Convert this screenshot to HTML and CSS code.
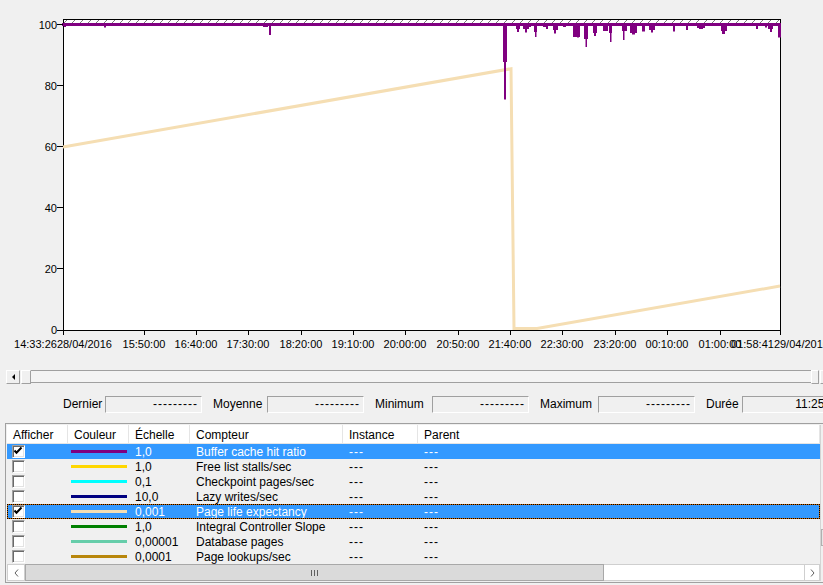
FILE: index.html
```html
<!DOCTYPE html>
<html lang="fr">
<head>
<meta charset="utf-8">
<title>Analyseur de performances</title>
<link rel="stylesheet" href="styles.css">
</head>
<body>
<svg class="chart" width="823" height="370" viewBox="0 0 823 370">
  <defs>
    <pattern id="hatch" x="0" y="20" width="8" height="3" patternUnits="userSpaceOnUse">
      <path d="M0,3 L3,0" stroke="#7a7a7a" stroke-width="1" fill="none"/>
    </pattern>
  </defs>
  <rect x="63.5" y="19.5" width="717" height="311" fill="#fff" stroke="#000"/>
  <rect x="64" y="20" width="716" height="3" fill="url(#hatch)"/>
  <path d="M63,147 L511,68.7 L514,328.5 L537,328.5 L780,286" fill="none" stroke="#f5deb3" stroke-width="3"/>
  <g fill="#800080">
    <rect x="62" y="23" width="719" height="3"/>
    <rect x="64" y="26" width="2" height="1"/>
    <rect x="104" y="26" width="2" height="1.5"/>
    <rect x="263" y="26" width="5" height="1"/>
    <rect x="269" y="26" width="2" height="9"/>
    <rect x="503" y="26" width="4" height="36"/>
    <rect x="504" y="26" width="2" height="73.5"/>
    <rect x="516" y="26" width="4" height="3"/>
    <rect x="517" y="26" width="2" height="6"/>
    <rect x="523" y="26" width="6" height="3"/>
    <rect x="525" y="26" width="2" height="6.5"/>
    <rect x="529" y="26" width="2" height="1"/>
    <rect x="534" y="26" width="3" height="6"/>
    <rect x="535" y="26" width="1.5" height="11"/>
    <rect x="543" y="26" width="5" height="1"/>
    <rect x="546" y="26" width="2" height="3"/>
    <rect x="553" y="26" width="5" height="4"/>
    <rect x="554" y="26" width="2" height="7.5"/>
    <rect x="563" y="26" width="3" height="1"/>
    <rect x="573" y="26" width="7" height="11"/>
    <rect x="577" y="26" width="2" height="11.5"/>
    <rect x="584" y="26" width="4" height="13"/>
    <rect x="585.5" y="26" width="1.5" height="21"/>
    <rect x="593" y="26" width="4" height="7"/>
    <rect x="594" y="26" width="2" height="10"/>
    <rect x="603" y="26" width="5" height="5"/>
    <rect x="609" y="26" width="3" height="7"/>
    <rect x="610" y="26" width="1.5" height="16"/>
    <rect x="622" y="26" width="5" height="5"/>
    <rect x="623" y="26" width="1.5" height="14"/>
    <rect x="630" y="26" width="7" height="7"/>
    <rect x="632" y="26" width="3" height="8.5"/>
    <rect x="642" y="26" width="3" height="5.5"/>
    <rect x="649" y="26" width="6" height="4"/>
    <rect x="651" y="26" width="2" height="6.5"/>
    <rect x="673" y="26" width="2" height="5.5"/>
    <rect x="686" y="26" width="2" height="4"/>
    <rect x="697" y="26" width="8" height="2"/>
    <rect x="699" y="26" width="4" height="3"/>
    <rect x="721" y="26" width="6" height="5"/>
    <rect x="722" y="26" width="3" height="8"/>
    <rect x="756" y="26" width="2" height="3"/>
    <rect x="765" y="26" width="2" height="1.5"/>
    <rect x="768" y="26" width="5" height="3"/>
    <rect x="770" y="26" width="2" height="6"/>
    <rect x="778" y="26" width="3" height="11.5"/>
  </g>
  <path d="M57,24.5H63M57,85.5H63M57,146.5H63M57,207.5H63M57,268.5H63M57,330.5H63M63.5,330V335M144.5,330V335M196.5,330V335M248.5,330V335M301.5,330V335M353.5,330V335M405.5,330V335M458.5,330V335M510.5,330V335M562.5,330V335M615.5,330V335M667.5,330V335M720.5,330V335M780.5,330V335" stroke="#000" stroke-width="1" fill="none"/>
  <text class="ylab" x="57" y="29">100</text>
  <text class="ylab" x="57" y="90">80</text>
  <text class="ylab" x="57" y="151">60</text>
  <text class="ylab" x="57" y="212">40</text>
  <text class="ylab" x="57" y="273">20</text>
  <text class="ylab" x="57" y="334">0</text>
  <text class="xlab" x="63" y="348">14:33:2628/04/2016</text>
  <text class="xlab" x="144" y="348">15:50:00</text>
  <text class="xlab" x="196" y="348">16:40:00</text>
  <text class="xlab" x="248" y="348">17:30:00</text>
  <text class="xlab" x="301" y="348">18:20:00</text>
  <text class="xlab" x="353" y="348">19:10:00</text>
  <text class="xlab" x="405" y="348">20:00:00</text>
  <text class="xlab" x="458" y="348">20:50:00</text>
  <text class="xlab" x="510" y="348">21:40:00</text>
  <text class="xlab" x="562" y="348">22:30:00</text>
  <text class="xlab" x="615" y="348">23:20:00</text>
  <text class="xlab" x="667" y="348">00:10:00</text>
  <text class="xlab" x="720" y="348">01:00:00</text>
  <text class="xlab" x="780" y="348">01:58:4129/04/2016</text>
</svg>

<div class="range">
  <div class="rbtn"><span class="tri"></span></div>
  <div class="rthumb"></div>
  <div class="rtrack"></div>
  <div class="rthumb end"></div>
  <div class="rbtn"></div>
</div>

<div class="stats">
  <span class="lbl">Dernier</span><span class="box dash">---------</span>
  <span class="lbl p">Moyenne</span><span class="box dash">---------</span>
  <span class="lbl p">Minimum</span><span class="box dash">---------</span>
  <span class="lbl p">Maximum</span><span class="box dash">---------</span>
  <span class="lbl p">Durée</span><span class="box">11:25:15</span>
</div>

<div class="list">
  <div class="lv">
    <div class="hdr">
      <div class="c w1">Afficher</div>
      <div class="c w2">Couleur</div>
      <div class="c w3">Échelle</div>
      <div class="c w4">Compteur</div>
      <div class="c w5">Instance</div>
      <div class="c w6">Parent</div>
    </div>

    <div class="row sel">
      <div class="c w1"><span class="cb"><svg width="11" height="11" viewBox="0 0 11 11"><path d="M1.5,4.5 L3.5,6.8 L8.5,1.5" fill="none" stroke="#000" stroke-width="2"/></svg></span></div>
      <div class="c w2"><div class="ln k1"></div></div>
      <div class="c w3">1,0</div>
      <div class="c w4">Buffer cache hit ratio</div>
      <div class="c w5 dash">---</div>
      <div class="c w6 dash">---</div>
    </div>
    <div class="row">
      <div class="c w1"><span class="cb"></span></div>
      <div class="c w2"><div class="ln k2"></div></div>
      <div class="c w3">1,0</div>
      <div class="c w4">Free list stalls/sec</div>
      <div class="c w5 dash">---</div>
      <div class="c w6 dash">---</div>
    </div>
    <div class="row">
      <div class="c w1"><span class="cb"></span></div>
      <div class="c w2"><div class="ln k3"></div></div>
      <div class="c w3">0,1</div>
      <div class="c w4">Checkpoint pages/sec</div>
      <div class="c w5 dash">---</div>
      <div class="c w6 dash">---</div>
    </div>
    <div class="row">
      <div class="c w1"><span class="cb"></span></div>
      <div class="c w2"><div class="ln k4"></div></div>
      <div class="c w3">10,0</div>
      <div class="c w4">Lazy writes/sec</div>
      <div class="c w5 dash">---</div>
      <div class="c w6 dash">---</div>
    </div>
    <div class="row sel focus">
      <div class="c w1"><span class="cb"><svg width="11" height="11" viewBox="0 0 11 11"><path d="M1.5,4.5 L3.5,6.8 L8.5,1.5" fill="none" stroke="#000" stroke-width="2"/></svg></span></div>
      <div class="c w2"><div class="ln k5"></div></div>
      <div class="c w3">0,001</div>
      <div class="c w4">Page life expectancy</div>
      <div class="c w5 dash">---</div>
      <div class="c w6 dash">---</div>
    </div>
    <div class="row">
      <div class="c w1"><span class="cb"></span></div>
      <div class="c w2"><div class="ln k6"></div></div>
      <div class="c w3">1,0</div>
      <div class="c w4">Integral Controller Slope</div>
      <div class="c w5 dash">---</div>
      <div class="c w6 dash">---</div>
    </div>
    <div class="row">
      <div class="c w1"><span class="cb"></span></div>
      <div class="c w2"><div class="ln k7"></div></div>
      <div class="c w3">0,00001</div>
      <div class="c w4">Database pages</div>
      <div class="c w5 dash">---</div>
      <div class="c w6 dash">---</div>
    </div>
    <div class="row">
      <div class="c w1"><span class="cb"></span></div>
      <div class="c w2"><div class="ln k8"></div></div>
      <div class="c w3">0,0001</div>
      <div class="c w4">Page lookups/sec</div>
      <div class="c w5 dash">---</div>
      <div class="c w6 dash">---</div>
    </div>

    <div class="hs">
      <div class="hb"><svg width="5" height="8" viewBox="0 0 5 8"><path d="M4,0.5 L1,4 L4,7.5" fill="none" stroke="#606060" stroke-width="1"/></svg></div>
      <div class="hthumb"><span class="grip"></span><span class="grip"></span><span class="grip"></span></div>
      <div class="htrack"></div>
      <div class="hb r"><svg width="5" height="8" viewBox="0 0 5 8"><path d="M1,0.5 L4,4 L1,7.5" fill="none" stroke="#606060" stroke-width="1"/></svg></div>
    </div>
  </div>
  <div class="vs"><div class="vthumb"></div></div>
</div>
</body>
</html>
```

FILE: styles.css
```css
* { box-sizing: border-box; }

html, body { margin: 0; }

body {
  width: 823px;
  height: 585px;
  overflow: hidden;
  background: #f0f0f0;
  color: #000;
  font: 12px "Liberation Sans", Arial, sans-serif;
}

/* chart */
.chart { display: block; width: 823px; height: 370px; }
.chart text {
  font-family: "Liberation Sans", Arial, sans-serif;
  font-size: 11px;
  fill: #000;
}
.ylab { text-anchor: end; }
.xlab { text-anchor: middle; }

/* range selector */
.range {
  display: flex;
  width: 828px;
  height: 14px;
  margin-left: 6px;
}
.rbtn {
  width: 14px;
  height: 14px;
  flex: none;
  background: #f0f0f0;
  border: 1px solid;
  border-color: #fff #a0a0a0 #a0a0a0 #fff;
  display: flex;
  align-items: center;
  justify-content: center;
}
.tri {
  width: 0;
  height: 0;
  border-right: 3px solid #000;
  border-top: 3px solid transparent;
  border-bottom: 3px solid transparent;
}
.rthumb {
  width: 10px;
  height: 14px;
  flex: none;
  margin-left: 1px;
  background: #f0f0f0;
  border: 1px solid;
  border-color: #fff #a0a0a0 #a0a0a0 #fff;
}
.rthumb.end { width: 8px; margin: 0 1px 0 0; }
.rtrack {
  flex: 1;
  height: 13px;
  background: #f4f4f4;
  border-top: 1px solid #a0a0a0;
  border-bottom: 1px solid #a0a0a0;
}

/* statistics */
.stats {
  display: grid;
  grid-template-columns: 42px 97px 65px 97px 68px 97px 69px 97px 47px 103px;
  width: max-content;
  height: 17px;
  margin: 12px 0 0 63px;
}
.lbl { line-height: 17px; white-space: nowrap; }
.lbl.p { padding-left: 11px; }
.box {
  height: 17px;
  border: 1px solid;
  border-color: #a0a0a0 #fff #fff #a0a0a0;
  text-align: right;
  padding-right: 3px;
  line-height: 15px;
  white-space: nowrap;
}
.dash { letter-spacing: 1px; }

/* counter list */
.list {
  display: flex;
  width: 834px;
  margin: 10px 0 0 5px;
  border: 1px solid #a0a0a0;
  padding: 1px;
}
.lv { width: 813px; flex: none; }

.hdr {
  display: flex;
  height: 19px;
  background: #fff;
  border-bottom: 1px solid #e5e5e5;
}
.hdr .c {
  padding: 3px 0 0 6px;
  line-height: 15px;
  border-right: 1px solid #e5e5e5;
  white-space: nowrap;
}
.w1, .w2, .w3 { width: 61px; flex: none; }
.w4 { width: 153px; flex: none; }
.w5 { width: 75px; flex: none; }
.w6 { flex: 1; }

.row {
  display: flex;
  height: 15px;
  padding-top: 1px;
  line-height: 14px;
}
.row .c { padding-left: 6px; white-space: nowrap; overflow: hidden; }
.row .c.w1 { padding-left: 5px; }
.row .c.w2 { padding-left: 3px; }

.sel { background: #3399ff; color: #fff; }
.focus { position: relative; }
.focus::before {
  content: "";
  position: absolute;
  inset: 0;
  border: 1px solid #cc6600;
}
.focus::after {
  content: "";
  position: absolute;
  inset: 0;
  border: 1px dotted #000;
}

.cb {
  display: block;
  width: 13px;
  height: 13px;
  background: #fff;
  border: 1px solid;
  border-color: #a0a0a0 #fff #fff #a0a0a0;
  box-shadow: inset 1px 1px 0 #696969, inset -1px -1px 0 #e3e3e3;
}
.cb svg { display: block; }

.ln { width: 56px; height: 3px; margin-top: 5px; }
.k1 { background: #800080; }
.k2 { background: #ffd700; }
.k3 { background: #00ffff; }
.k4 { background: #000080; }
.k5 { background: #f5deb3; }
.k6 { background: #008000; }
.k7 { background: #66cdaa; }
.k8 { background: #b8860b; }

/* horizontal scrollbar */
.hs { display: flex; height: 17px; }
.hb {
  width: 18px;
  height: 17px;
  flex: none;
  background: #fff;
  border: 1px solid #cfcfcf;
  display: flex;
  align-items: center;
  justify-content: center;
}
.hb.r { width: 16px; }
.hb svg { display: block; }
.hthumb {
  width: 579px;
  height: 17px;
  flex: none;
  background: #dadada;
  border: 1px solid #a8a8a8;
  display: flex;
  align-items: center;
  justify-content: center;
  gap: 2px;
}
.grip { width: 1px; height: 6px; background: #606060; }
.htrack {
  flex: 1;
  height: 17px;
  background: #fff;
  border-top: 1px solid #cfcfcf;
  border-bottom: 1px solid #cfcfcf;
}

/* vertical scrollbar (mostly off-screen) */
.vs {
  width: 17px;
  flex: none;
  background: #f0f0f0;
  border-left: 1px solid #d4d4d4;
}
.vthumb {
  margin-top: 104px;
  height: 17px;
  background: #e6e6e6;
  border: 1px solid #b0b0b0;
}
```
